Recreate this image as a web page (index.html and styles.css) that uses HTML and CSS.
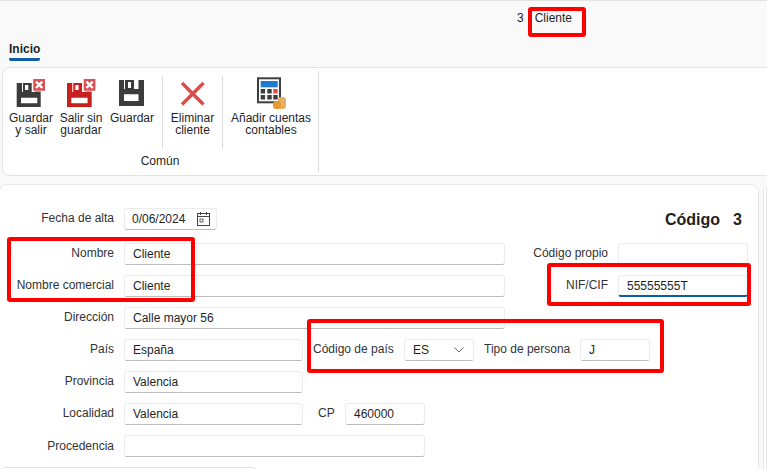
FILE: index.html
```html
<!DOCTYPE html>
<html lang="es">
<head>
<meta charset="utf-8">
<title>Cliente</title>
<link rel="stylesheet" href="styles.css">
</head>
<body>
<div class="page">
  <header class="topbar">
    <span class="rec-num">3</span>
    <span class="rec-name">Cliente</span>
  </header>
  <nav class="tabs"><span class="tab">Inicio</span></nav>
  <section class="ribbon">
    <div class="group">
      <div class="tools">
        <button class="tool t-a">
          <svg class="ico" width="36" height="32" viewBox="0 0 36 32"><path fill="#3c3c3c" fill-rule="evenodd" d="M3.7 8H9v9h1V8h8.7v9H22v-.5h5.700V32h-24zM12 10v5h3.300v-5zM8 22.700v5.600h16.300v-5.600z"/><rect x="20.300" y="4" width="11.700" height="11.700" fill="#dc4f53"/><path d="M23 6.700l6.300 6.300M29.300 6.700l-6.300 6.300" stroke="#fff" stroke-width="2.400"/></svg>
          <span>Guardar<br>y salir</span>
        </button>
        <button class="tool t-b">
          <svg class="ico" width="36" height="32" viewBox="0 0 36 32"><path fill="#c8201f" fill-rule="evenodd" d="M4 8h5.300v9h1V8H19v9h3.300v-.5H28.700V32H4zM12.300 10v5h3.300v-5zM8.300 22.700v5.600h16.300v-5.600z"/><rect x="20.700" y="4" width="11.700" height="11.700" fill="#dc4f53"/><path d="M23.400 6.700l6.300 6.300M29.700 6.700l-6.300 6.300" stroke="#fff" stroke-width="2.400"/></svg>
          <span>Salir sin<br>guardar</span>
        </button>
        <button class="tool t-c">
          <svg class="ico" width="26" height="32" viewBox="0 0 26 32"><path fill="#3c3c3c" fill-rule="evenodd" d="M0 5h5v9h1V5h9v9h4.500V5H25v26H0zM9 7v6h3V7zM5 19.300V26h14.500v-6.700z"/></svg>
          <span>Guardar</span>
        </button>
        <i class="sep"></i>
        <button class="tool t-d">
          <svg class="ico" width="26" height="32" viewBox="0 0 26 32"><path d="M2 8l21.500 21.500M23.500 8L2 29.500" stroke="#dc4c48" stroke-width="3.400"/></svg>
          <span>Eliminar<br>cliente</span>
        </button>
        <i class="sep"></i>
        <button class="tool t-e">
          <svg class="ico" width="30" height="32" viewBox="0 0 30 32"><rect x="2" y="3.300" width="22" height="24" fill="#fff" stroke="#3c4043" stroke-width="2"/><rect x="4.700" y="6" width="17" height="6.300" fill="#1e7bd2"/><path fill="#3c3c3c" d="M4.700 14h4.400v4.500H4.700zM11.300 14h4.400v4.500h-4.400zM4.700 20h4.400v4.500H4.700zM11.300 20h4.400v4.500h-4.400zM17.300 20h4.400v4.500h-4.400z"/><rect x="17.300" y="14" width="4.400" height="4.500" fill="#dc4c48"/><rect x="22" y="22" width="8" height="12" rx="3" fill="#e3b066"/><rect x="17" y="26" width="8" height="8" rx="3" fill="#e89a2e"/></svg>
          <span>Añadir cuentas<br>contables</span>
        </button>
      </div>
      <div class="group-name">Común</div>
    </div>
    <i class="sep sep-end"></i>
  </section>
  <div class="content">
    <main class="card">
      <div class="row row-first">
        <label class="lab">Fecha de alta</label>
        <div class="field w-date date">
          <span>0/06/2024</span>
          <svg width="13" height="14" viewBox="0 0 13 14" fill="none" stroke="#444"><rect x=".5" y="1.500" width="12" height="12"/><path d="M.5 4.500h12M3.500 0v3M9.500 0v3"/><rect x="3" y="7" width="3" height="3" fill="none" stroke-width=".8"/></svg>
        </div>
        <div class="code">Código<b class="code-n">3</b></div>
      </div>
      <div class="row">
        <label class="lab">Nombre</label>
        <div class="field w-long">Cliente</div>
        <label class="lab lab-r">Código propio</label>
        <div class="field w-side"></div>
      </div>
      <div class="row">
        <label class="lab">Nombre comercial</label>
        <div class="field w-long">Cliente</div>
        <label class="lab lab-r">NIF/CIF</label>
        <div class="field w-side focus">55555555T</div>
      </div>
      <div class="row">
        <label class="lab">Dirección</label>
        <div class="field w-long">Calle mayor 56</div>
      </div>
      <div class="row">
        <label class="lab">País</label>
        <div class="field w-mid">España</div>
        <label class="lab lab-cp">Código de país</label>
        <div class="field w-sel sel">ES<svg width="10" height="6" viewBox="0 0 10 6" fill="none" stroke="#666"><path d="M.5.5L5 5 9.500.5"/></svg></div>
        <label class="lab lab-tp">Tipo de persona</label>
        <div class="field w-tp">J</div>
      </div>
      <div class="row">
        <label class="lab">Provincia</label>
        <div class="field w-mid">Valencia</div>
      </div>
      <div class="row">
        <label class="lab">Localidad</label>
        <div class="field w-mid">Valencia</div>
        <label class="lab lab-zip">CP</label>
        <div class="field w-zip">460000</div>
      </div>
      <div class="row">
        <label class="lab lab-proc">Procedencia</label>
        <div class="field w-proc"></div>
      </div>
      <div class="subcard"></div>
    </main>
    <aside class="side"></aside>
  </div>
  <i class="mark m1"></i>
  <i class="mark m2"></i>
  <i class="mark m3"></i>
  <i class="mark m4"></i>
</div>
</body>
</html>
```
FILE: styles.css
```css
* { box-sizing: border-box; }
html, body { margin: 0; padding: 0; }
body {
  width: 767px; height: 469px; overflow: hidden;
  background: #f9f9f9; color: #1f1f1f;
  font-family: "Liberation Sans", Arial, sans-serif; font-size: 12px;
}
.page { position: relative; width: 767px; height: 469px; overflow: hidden; border-top: 1px solid #e3e3e3; }
.topbar { height: 39px; padding: 10px 0 0 517px; display: flex; gap: 11px; line-height: 14px; }
.tabs { height: 27px; padding-left: 9px; }
.tab { display: inline-block; height: 21px; padding-top: 1px; font-weight: 600; line-height: 16px; border-bottom: 3px solid #0f5ca8; border-radius: 0 0 2px 2px; }
.ribbon {
  margin-left: 2px; margin-right: -8px; height: 109px;
  background: #fff; border: 1px solid #e3e3e3; border-radius: 8px;
  display: flex; padding: 3px 0;
}
.group { width: 315px; display: flex; flex-direction: column; }
.tools { display: flex; height: 78px; }
.tool {
  border: 0; background: none; padding: 4px 0 0; margin: 0; flex: none;
  font: inherit; color: inherit; line-height: 12px; text-align: center;
  display: flex; flex-direction: column; align-items: center;
}
.ico { display: block; height: 32px; margin-bottom: 5px; overflow: visible; }
.t-a { width: 50px; margin-left: 3px; }
.t-b { width: 50px; }
.t-c { width: 52px; margin-right: 4px; }
.t-d { width: 59px; }
.t-e { width: 94px; margin-left: 1px; }
.sep { display: block; width: 1px; margin-top: 5px; background: #dcdcdc; }
.sep-end { height: 101px; margin-top: 0; }
.group-name { text-align: center; line-height: 14px; padding-top: 5px; padding-right: 1px; }
.content { display: flex; gap: 4px; margin-top: 8px; }
.card { width: 760px; height: 290px; background: #fff; border: 1px solid #e8e8e8; border-radius: 8px; padding-top: 23px; margin-left: -1px; flex: none; }
.side { flex: 1; height: 290px; margin-top: 3px; background: #fff; border: 1px solid #e8e8e8; border-radius: 6px 0 0 0; }
.row { display: flex; align-items: flex-start; height: 32px; }
.row-first { height: 35px; }
.lab { width: 114px; padding-top: 1px; text-align: right; line-height: 18px; flex: none; color: #333; white-space: nowrap; }
.lab-proc { padding-top: 2px; }
.field {
  height: 22px; margin-left: 10px; padding-left: 8px; flex: none;
  line-height: 21px; background: #fff; font-size: 12px; color: #1f1f1f;
  border: 1px solid #ececec; border-bottom-color: #bdbdbd; border-radius: 3px;
}
.w-long { width: 381px; }
.w-mid { width: 179px; }
.w-proc { width: 301px; }
.w-date { width: 93px; padding-left: 7px; display: flex; align-items: center; gap: 12px; }
.w-side { width: 130px; }
.w-sel { width: 70px; }
.w-tp { width: 70px; }
.w-zip { width: 80px; }
.sel { display: flex; justify-content: space-between; align-items: center; padding-right: 9px; }
.focus { border-bottom: 2px solid #0f5ca8; }
.lab-r { width: 103px; }
.lab-cp { width: 81px; margin-left: 10px; text-align: left; }
.lab-tp { width: 86px; margin-left: 10px; text-align: left; }
.lab-zip { width: 17px; margin-left: 15px; text-align: left; }
.code { margin-left: auto; padding-right: 16px; font-size: 16px; font-weight: 700; line-height: 24px; }
.code-n { margin-left: 13px; }
.subcard { width: 258px; height: 10px; background: #fff; border: 1px solid #e3e3e3; border-radius: 6px 6px 0 0; }
.mark { position: absolute; display: block; border: 4px solid #ff0000; border-radius: 3px; }
.m1 { left: 528px; top: 6px; width: 58px; height: 30px; }
.m2 { left: 7px; top: 236px; width: 188px; height: 65px; }
.m3 { left: 547px; top: 262px; width: 204px; height: 43px; }
.m4 { left: 307px; top: 318px; width: 357px; height: 54px; }
```
